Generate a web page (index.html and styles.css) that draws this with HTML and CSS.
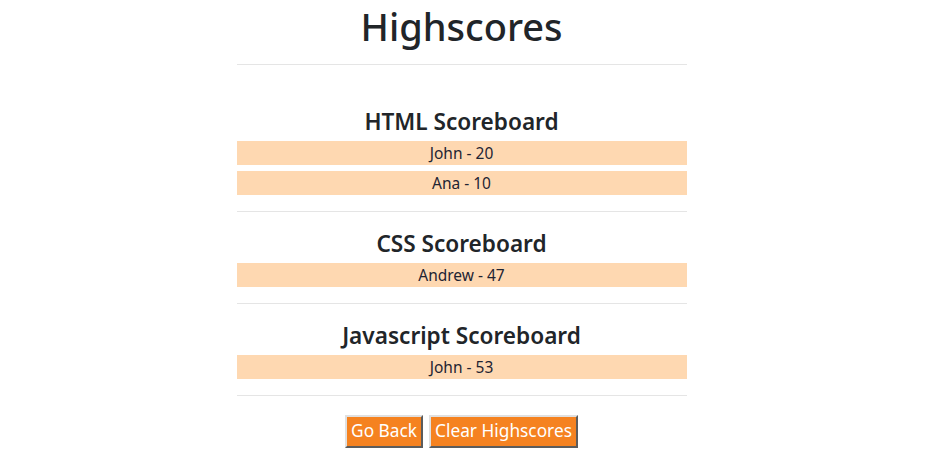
FILE: index.html
```html
<!DOCTYPE html>
<html lang="en">
<head>
<meta charset="utf-8">
<title>Highscores</title>
<link rel="stylesheet" href="styles.css">
</head>
<body>
<main class="page">
  <h1 class="title">Highscores</h1>
  <hr class="divider divider-top">
  <section class="board board-first">
    <h2 class="board-title">HTML Scoreboard</h2>
    <ul class="scores">
      <li class="score">John - 20</li>
      <li class="score">Ana - 10</li>
    </ul>
  </section>
  <hr class="divider">
  <section class="board">
    <h2 class="board-title">CSS Scoreboard</h2>
    <ul class="scores">
      <li class="score">Andrew - 47</li>
    </ul>
  </section>
  <hr class="divider">
  <section class="board">
    <h2 class="board-title">Javascript Scoreboard</h2>
    <ul class="scores">
      <li class="score">John - 53</li>
    </ul>
  </section>
  <hr class="divider">
  <div class="actions">
    <button class="btn" type="button">Go Back</button>
    <button class="btn" type="button">Clear Highscores</button>
  </div>
</main>
</body>
</html>
```
FILE: styles.css
```css
html, body {
  margin: 0;
  padding: 0;
  background: #ffffff;
}
body {
  font-family: "Noto Sans", "Open Sans", "Liberation Sans", sans-serif;
  color: #212529;
}
.page {
  width: 450px;
  margin: 0 auto;
  text-align: center;
  transform: translateX(-1px);
}
.title {
  margin: 0;
  padding-top: 2px;
  padding-bottom: 2px;
  font-size: 38px;
  font-weight: 500;
  line-height: 48px;
}
.divider {
  margin: 0;
  border: 0;
  border-top: 1px solid #e5e5e5;
}
.divider-top {
  margin-top: 12px;
}
.board {
  padding: 17px 0 16px;
}
.board-first {
  padding-top: 42px;
}
.board-title {
  margin: 0 0 5px;
  font-size: 22.6px;
  font-weight: 600;
  line-height: 29px;
}
.scores {
  list-style: none;
  margin: 0;
  padding: 0;
  display: flex;
  flex-direction: column;
  gap: 6px;
}
.score {
  background: #fed8b1;
  height: 24px;
  line-height: 24px;
  font-size: 15.5px;
  color: #1e2433;
}
.actions {
  padding-top: 19px;
  display: flex;
  justify-content: center;
  gap: 6px;
}
.btn {
  font-family: inherit;
  font-size: 17.3px;
  line-height: 24px;
  color: #ffffff;
  background: #f58220;
  border: 2px outset #b0b0b0;
  border-top-color: #e0e0e0;
  border-left-color: #e0e0e0;
  padding: 2px 4px 3px;
  margin: 0;
}
```
